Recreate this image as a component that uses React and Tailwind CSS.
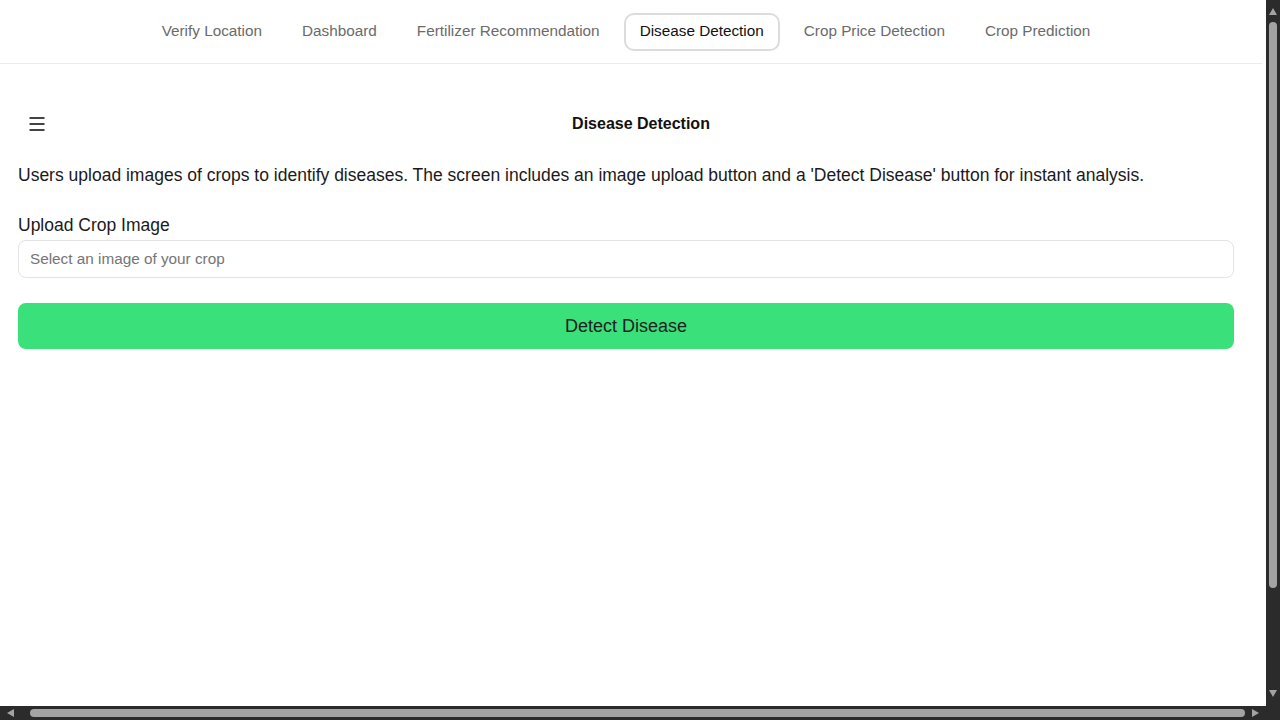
import React, { useState } from "react";

const tabs = [
    "Verify Location",
    "Dashboard",
    "Fertilizer Recommendation",
    "Disease Detection",
    "Crop Price Detection",
    "Crop Prediction",
];

// small triangle used on the scrollbar arrow buttons
const Arrow = ({ dir }) => {
    const points = {
        up: "4,0 8,7 0,7",
        down: "0,0 8,0 4,7",
        left: "7,0 7,8 0,4",
        right: "0,0 7,4 0,8",
    }[dir];
    const vertical = dir === "up" || dir === "down";
    return (
        <svg width={vertical ? 8 : 7} height={vertical ? 7 : 8} viewBox={vertical ? "0 0 8 7" : "0 0 7 8"}>
            <polygon points={points} fill="#a3a3a3" />
        </svg>
    );
};

const MenuIcon = () => (
    <svg width="16" height="14" viewBox="0 0 16 14" fill="none" stroke="#222" strokeWidth="1.7">
        <line x1="0.5" y1="1" x2="15.5" y2="1" />
        <line x1="0.5" y1="7" x2="15.5" y2="7" />
        <line x1="0.5" y1="13" x2="15.5" y2="13" />
    </svg>
);

const App = () => {
    const [active, setActive] = useState("Disease Detection");
    const [file, setFile] = useState("");

    return (
        <div className="h-screen w-screen flex flex-col overflow-hidden bg-white text-[#1a1a1a] [font-family:'Liberation_Sans',Arial,sans-serif]">
            <div className="flex-1 flex min-h-0">
                <div className="flex-1 min-w-0 overflow-hidden">
                    {/* Top navigation */}
                    <header className="w-[1262px] h-[64px] border-b border-[#ececec]">
                        <nav className="ml-[18px] w-[1216px] h-full flex items-center justify-center gap-2">
                            {tabs.map((tab) => (
                                <button
                                    key={tab}
                                    onClick={() => setActive(tab)}
                                    className={
                                        active === tab
                                            ? "h-[38px] px-[14px] rounded-[10px] border-2 border-[#dcdcdc] text-[15.3px] text-[#111]"
                                            : "h-[38px] px-[14px] rounded-[10px] border-2 border-transparent text-[15.3px] text-[#6b6b6b]"
                                    }
                                >
                                    {tab}
                                </button>
                            ))}
                        </nav>
                    </header>

                    {/* Page content */}
                    <main className="ml-[18px] w-[1216px] pt-[40px]">
                        <div className="h-[40px] flex items-center">
                            <button className="w-[30px] h-[30px] pl-[11px] flex items-center">
                                <MenuIcon />
                            </button>
                            <h1 className="flex-1 text-center text-base font-bold text-[#111]">
                                Disease Detection
                            </h1>
                        </div>

                        <p className="mt-[19px] text-[17.5px] leading-6 text-[#1a1a1a]">
                            Users upload images of crops to identify diseases. The screen includes an image upload button and a 'Detect Disease' button for instant analysis.
                        </p>

                        <label className="block mt-[26px] text-[17.5px] leading-6 text-[#1a1a1a]">
                            Upload Crop Image
                        </label>
                        <input
                            type="text"
                            value={file}
                            onChange={(e) => setFile(e.target.value)}
                            placeholder="Select an image of your crop"
                            className="mt-[3px] block w-full h-[38px] px-[11px] rounded-lg border border-[#e3e3e3] text-[15.3px] placeholder:text-[#757575] outline-none"
                        />

                        <button className="mt-[25px] w-full h-[46px] rounded-lg bg-[#3ae07a] text-[18px] text-[#1f1f1f]">
                            Detect Disease
                        </button>
                    </main>
                </div>

                {/* vertical scrollbar */}
                <div className="w-[14px] bg-[#2b2b2b] flex flex-col items-center pt-[8px] pb-[9px]">
                    <Arrow dir="up" />
                    <div className="mt-[7px] w-[8px] h-[566px] rounded-full bg-[#a3a3a3]" />
                    <div className="flex-1" />
                    <Arrow dir="down" />
                </div>
            </div>

            {/* horizontal scrollbar */}
            <div className="h-[14px] bg-[#2b2b2b] flex items-center pl-[7px]">
                <Arrow dir="left" />
                <div className="ml-[16px] w-[1215px] h-[8px] rounded-full bg-[#a3a3a3]" />
                <div className="ml-[7px]">
                    <Arrow dir="right" />
                </div>
            </div>
        </div>
    );
};

export default App;
